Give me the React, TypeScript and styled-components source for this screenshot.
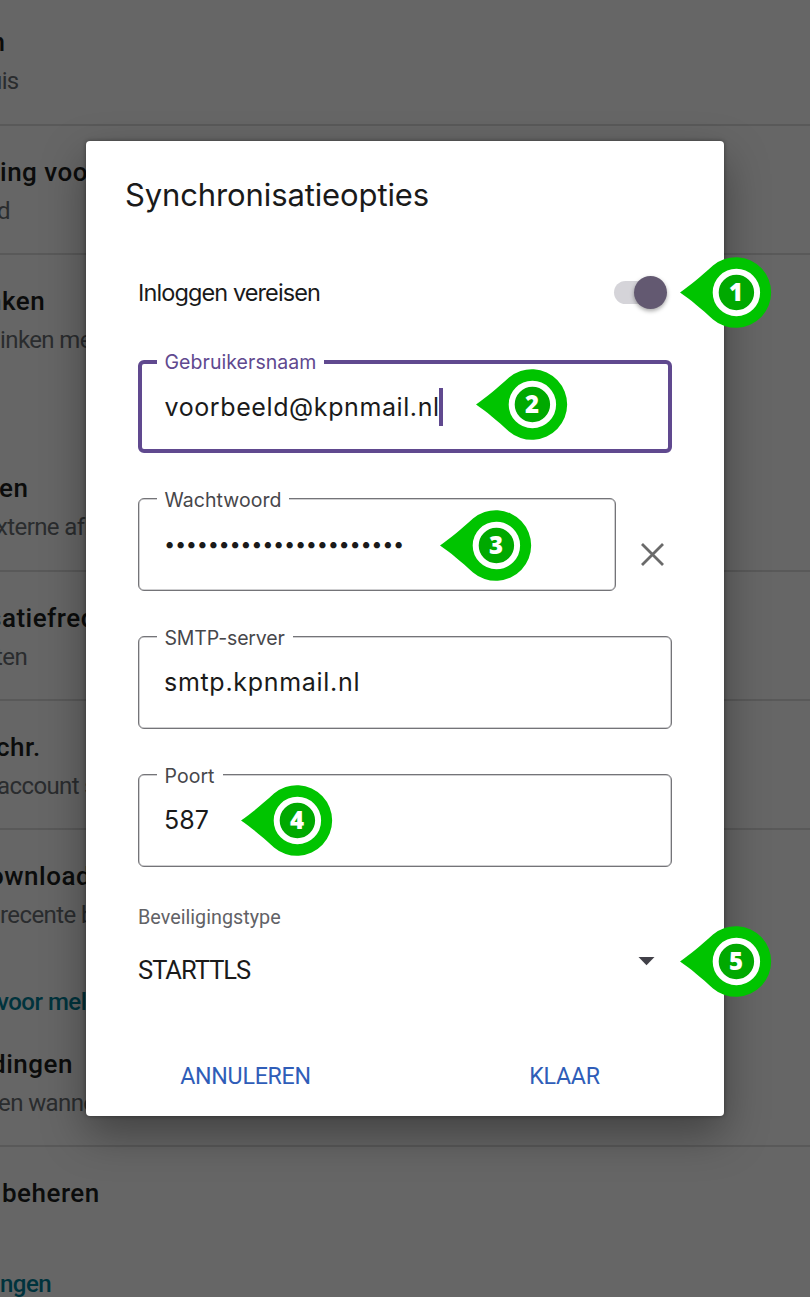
import React from "react";
import styled, { createGlobalStyle } from "styled-components";

const GlobalStyle = createGlobalStyle`
  * { box-sizing: border-box; }
  body { margin: 0; background: #fff; font-family: Roboto, "Liberation Sans", sans-serif; }
  button { font: inherit; border: 0; background: none; padding: 0; }
`;

const Screen = styled.main`
  position: relative;
  width: 810px;
  height: 1297px;
  overflow: hidden;
`;

const SettingsList = styled.div`
  display: flex;
  flex-direction: column;
  white-space: nowrap;
`;

const SettingsRow = styled.section<{ $height?: number; $last?: boolean }>`
  height: ${(p) => p.$height ?? 129}px;
  padding-top: 27px;
  border-bottom: ${(p) => (p.$last ? "0" : "2px solid #dedede")};
`;

const Setting = styled.div<{ $gap?: number }>`
  margin-top: ${(p) => p.$gap ?? 0}px;
`;

const SettingTitle = styled.div<{ $x: number }>`
  margin-left: ${(p) => p.$x}px;
  font-size: 26px;
  font-weight: 500;
  letter-spacing: 0.5px;
  line-height: 38px;
  color: #1c1e20;
`;

const SettingDetail = styled.div<{ $x: number }>`
  margin: 1px 0 0 ${(p) => p.$x}px;
  font-size: 24px;
  letter-spacing: -0.6px;
  line-height: 38px;
  color: #6a6f74;
`;

const SectionHeading = styled.h2<{ $x: number; $gap: number }>`
  margin: ${(p) => p.$gap}px 0 0 ${(p) => p.$x}px;
  font-size: 24px;
  font-weight: 500;
  letter-spacing: -0.5px;
  line-height: 30px;
  color: #007f98;
`;

const Scrim = styled.div`
  position: absolute;
  inset: 0;
  padding: 141px 0 0 86px;
  background: rgba(0, 0, 0, 0.6);
`;

const Dialog = styled.div`
  display: flex;
  flex-direction: column;
  width: 638px;
  height: 975px;
  padding: 0 52px;
  border-radius: 4px;
  background: #fff;
  box-shadow: 0 18px 44px rgba(0, 0, 0, 0.36), 0 0 4px rgba(0, 0, 0, 0.4);
  color: #1a1a1a;
`;

const DialogTitle = styled.h1`
  margin: 0 0 0 -13px;
  font-family: Inter, sans-serif;
  font-size: 31px;
  font-weight: 400;
  letter-spacing: -0.12px;
  line-height: 108px;
`;

const SwitchRow = styled.div`
  position: relative;
  display: flex;
  align-items: center;
  justify-content: space-between;
  height: 86px;
  margin-bottom: 25px;
  padding-right: 5.5px;
`;

const SwitchLabel = styled.span`
  font-family: Inter, sans-serif;
  font-size: 23.5px;
  letter-spacing: -0.9px;
`;

const Track = styled.span`
  display: flex;
  align-items: center;
  justify-content: flex-end;
  width: 53px;
  height: 23px;
  border-radius: 12px;
  background: linear-gradient(to right, #d5d4d9 42px, transparent 42px);
`;

const Thumb = styled.span`
  width: 33px;
  height: 33px;
  border-radius: 50%;
  background: #635971;
  box-shadow: 0 2px 4px rgba(0, 0, 0, 0.35);
`;

const Fields = styled.div`
  display: grid;
  grid-auto-rows: 93px;
  gap: 45px;
`;

const FieldRow = styled.div`
  display: flex;
`;

const FieldBox = styled.div<{ $active?: boolean }>`
  position: relative;
  display: flex;
  align-items: center;
  flex: 1;
  height: 93px;
  padding: 0 ${(p) => (p.$active ? 22.5 : 25)}px ${(p) => (p.$active ? 0 : 1)}px;
  border: ${(p) => (p.$active ? "4px solid #60498f" : "1px solid #747478")};
  border-radius: 6px;
  box-shadow: ${(p) => (p.$active ? "none" : "inset 0 0 0 0.5px #a0a0a4")};
`;

const FieldLabel = styled.label<{ $active?: boolean; $spacing?: number }>`
  position: absolute;
  top: ${(p) => (p.$active ? -12 : -9)}px;
  left: ${(p) => (p.$active ? 15 : 18)}px;
  padding: 0 8px 0 7.5px;
  background: #fff;
  font-family: Inter, sans-serif;
  font-size: 19.5px;
  letter-spacing: ${(p) => p.$spacing ?? 0.05}px;
  line-height: 20px;
  color: ${(p) => (p.$active ? "#60498f" : "#47474b")};
`;

const Value = styled.span<{ $spacing?: number }>`
  font-family: Inter, sans-serif;
  font-size: 25px;
  letter-spacing: ${(p) => p.$spacing ?? 0.7}px;
  line-height: 36px;
`;

const MaskedValue = styled(Value)`
  padding-bottom: 1px;
  font-size: 20px;
  letter-spacing: -0.34px;
`;

const Caret = styled.span`
  width: 4px;
  height: 38px;
  margin-left: -1px;
  background: #60498f;
`;

const ClearButton = styled.button`
  display: flex;
  width: 56px;
  padding: 44px 0 0 24px;
`;

const SelectLabel = styled.div`
  margin-top: 39px;
  font-size: 19.8px;
  line-height: 24px;
  color: #626266;
`;

const SelectRow = styled.div`
  position: relative;
  display: flex;
  justify-content: space-between;
  margin-top: 20px;
  padding-right: 17px;
  font-size: 25.5px;
  letter-spacing: -1px;
  line-height: 40px;
`;

const Arrow = styled.svg`
  margin-top: 7px;
`;

const Actions = styled.div`
  display: grid;
  grid-template-columns: 1fr 1fr;
  margin: 46px -52px 0;
`;

const Action = styled.button`
  height: 80px;
  font-size: 23.2px;
  letter-spacing: -0.25px;
  color: #2f5db8;
`;

const Pin = styled.span<{ $x: number; $y: number }>`
  position: absolute;
  left: ${(p) => p.$x}px;
  top: ${(p) => p.$y}px;
  display: flex;
  align-items: center;
  justify-content: center;
  width: 92px;
  height: 71px;
  padding: 0 0 2px 21px;
  font-family: "Open Sans", sans-serif;
  font-size: 24px;
  font-weight: 800;
  line-height: 69px;
  letter-spacing: 0;
  color: #fff;
`;

const PinShape = styled.svg`
  position: absolute;
  inset: 0;
`;

const PinNumber = styled.span`
  position: relative;
`;

function Marker({ n, x, y }: { n: number; x: number; y: number }) {
  return (
    <Pin $x={x} $y={y}>
      <PinShape width="92" height="71" viewBox="0 0 92 71">
        <path d="M0 35.5C10 28.7 21 19.5 33 8.6A35.3 35.3 0 1 1 33 62.4C21 51.5 10 42.3 0 35.5Z" fill="#00c400" />
        <circle cx="56.4" cy="35.5" r="20.7" fill="#00a900" stroke="#fff" strokeWidth="6" />
      </PinShape>
      <PinNumber>{n}</PinNumber>
    </Pin>
  );
}

function Background() {
  return (
    <SettingsList>
      <SettingsRow $height={126}>
        <Setting $gap={-4}>
          <SettingTitle $x={-9.5}>n</SettingTitle>
          <SettingDetail $x={-11}>uis</SettingDetail>
        </Setting>
      </SettingsRow>
      <SettingsRow>
        <SettingTitle $x={0}>ing voor</SettingTitle>
        <SettingDetail $x={-3}>d</SettingDetail>
      </SettingsRow>
      <SettingsRow $height={317}>
        <SettingTitle $x={-13}>nken</SettingTitle>
        <SettingDetail $x={0}>inken met</SettingDetail>
        <Setting $gap={110}>
          <SettingTitle $x={-1}>en</SettingTitle>
          <SettingDetail $x={-4}>xterne afb</SettingDetail>
        </Setting>
      </SettingsRow>
      <SettingsRow>
        <SettingTitle $x={-12}>satiefreq</SettingTitle>
        <SettingDetail $x={-5}>ten</SettingDetail>
      </SettingsRow>
      <SettingsRow>
        <SettingTitle $x={-4}>chr.</SettingTitle>
        <SettingDetail $x={-3}>account s</SettingDetail>
      </SettingsRow>
      <SettingsRow $height={317}>
        <SettingTitle $x={-11}>ownload</SettingTitle>
        <SettingDetail $x={0}>recente b</SettingDetail>
        <SectionHeading $x={-3} $gap={53}>voor meld</SectionHeading>
        <Setting $gap={28}>
          <SettingTitle $x={-9}>dingen</SettingTitle>
          <SettingDetail $x={-2}>en wanneer</SettingDetail>
        </Setting>
      </SettingsRow>
      <SettingsRow $height={170} $last>
        <SettingTitle $x={2}>beheren</SettingTitle>
        <SectionHeading $x={0} $gap={57}>ngen</SectionHeading>
      </SettingsRow>
    </SettingsList>
  );
}

export default function App() {
  return (
    <Screen>
      <GlobalStyle />
      <Background />
      <Scrim>
        <Dialog role="dialog" aria-label="Synchronisatieopties">
          <DialogTitle>Synchronisatieopties</DialogTitle>
          <SwitchRow>
            <SwitchLabel>Inloggen vereisen</SwitchLabel>
            <Track><Thumb /></Track>
            <Marker n={1} x={541.5} y={8} />
          </SwitchRow>
          <Fields>
            <FieldBox $active>
              <FieldLabel $active>Gebruikersnaam</FieldLabel>
              <Value $spacing={0.6}>voorbeeld@kpnmail.nl</Value>
              <Caret />
              <Marker n={2} x={333.5} y={4.5} />
            </FieldBox>
            <FieldRow>
              <FieldBox>
                <FieldLabel>Wachtwoord</FieldLabel>
                <MaskedValue>{"•".repeat(22)}</MaskedValue>
                <Marker n={3} x={300.5} y={10.5} />
              </FieldBox>
              <ClearButton aria-label="Wissen">
                <svg width="25" height="25" viewBox="0 0 25 25">
                  <path d="M2 2L23 23M23 2L2 23" stroke="#6a6a6a" strokeWidth="2.8" />
                </svg>
              </ClearButton>
            </FieldRow>
            <FieldBox>
              <FieldLabel $spacing={-0.15}>SMTP-server</FieldLabel>
              <Value>smtp.kpnmail.nl</Value>
            </FieldBox>
            <FieldBox>
              <FieldLabel>Poort</FieldLabel>
              <Value $spacing={0.1}>587</Value>
              <Marker n={4} x={101.5} y={9.5} />
            </FieldBox>
          </Fields>
          <SelectLabel>Beveiligingstype</SelectLabel>
          <SelectRow>
            STARTTLS
            <Arrow width="17" height="9" viewBox="0 0 17 9">
              <path d="M0.5 0H16.5L8.5 8.3Z" fill="#414048" />
            </Arrow>
            <Marker n={5} x={541.5} y={-24.5} />
          </SelectRow>
          <Actions>
            <Action>ANNULEREN</Action>
            <Action>KLAAR</Action>
          </Actions>
        </Dialog>
      </Scrim>
    </Screen>
  );
}
